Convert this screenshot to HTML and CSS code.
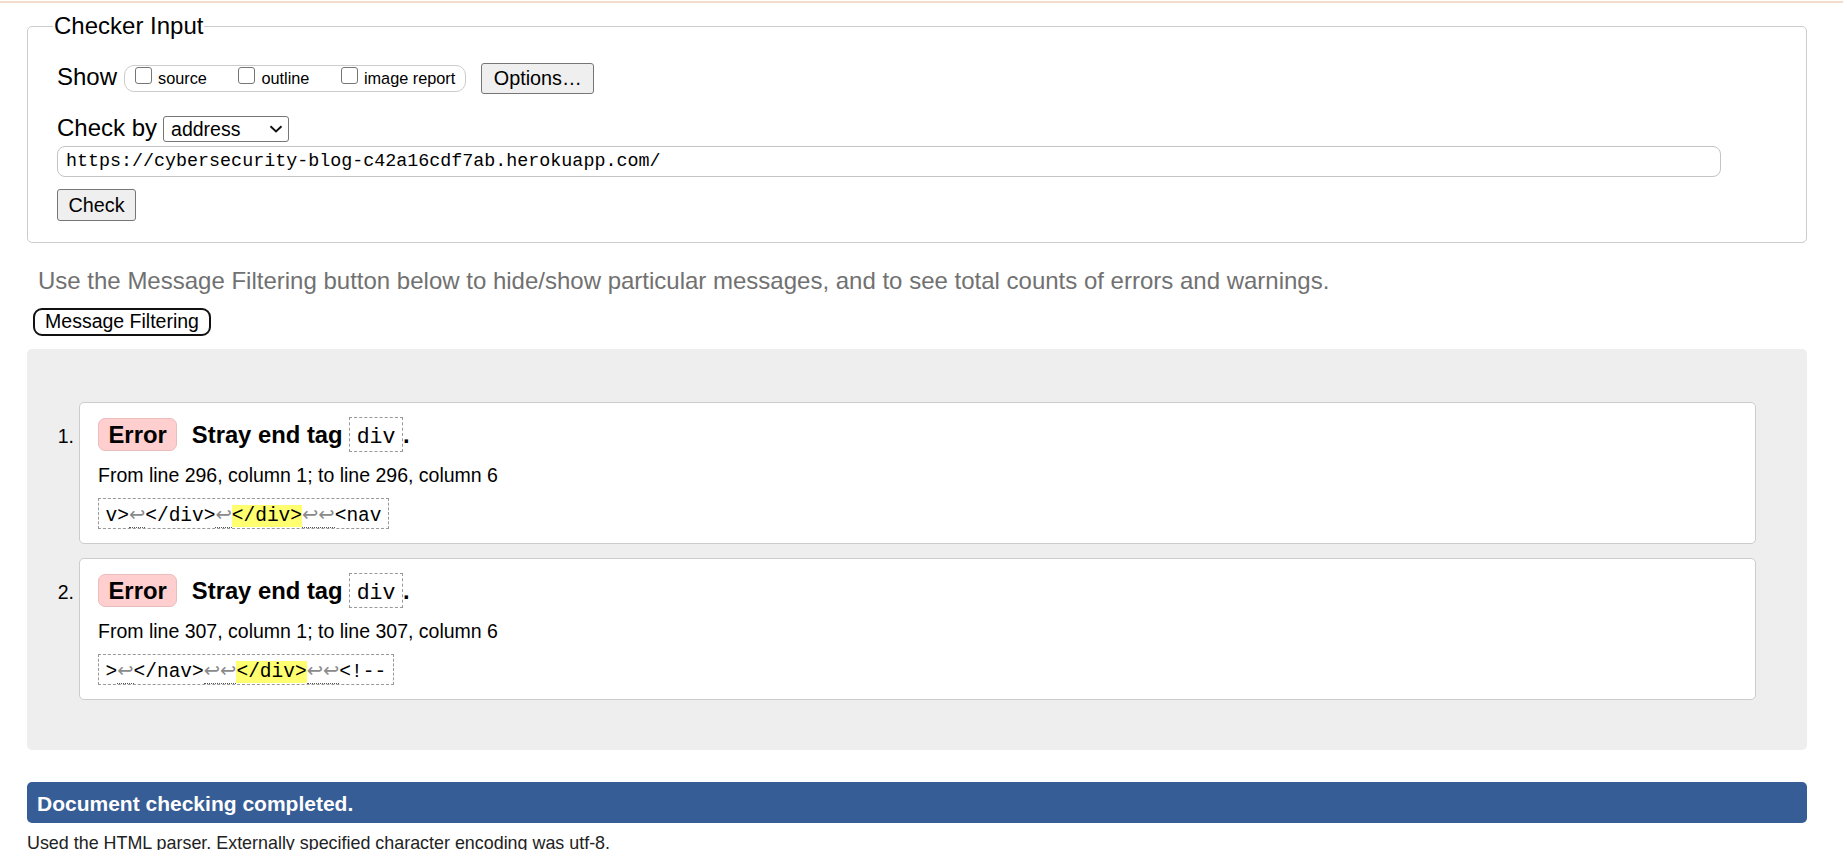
FILE: index.html
```html
<!DOCTYPE html>
<html lang="en">
<head>
<meta charset="utf-8">
<title>Nu Html Checker</title>
<link rel="stylesheet" href="styles.css">
</head>
<body>
<div class="topline"></div>
<main class="page">
  <form class="checker">
    <fieldset class="input-set">
      <legend>Checker Input</legend>
      <div class="row show-row">
        <span class="lbl">Show</span>
        <span class="opts">
          <label class="opt"><input type="checkbox"><span>source</span></label>
          <label class="opt"><input type="checkbox"><span>outline</span></label>
          <label class="opt"><input type="checkbox"><span>image report</span></label>
        </span>
        <button type="button" class="btn btn-options">Options…</button>
      </div>
      <div class="row by-row">
        <span class="lbl">Check by</span>
        <span class="select" role="listbox"><span>address</span><svg class="chev" width="14" height="8" viewBox="0 0 14 8"><path d="M1.5 1.2 L7 6.5 L12.5 1.2" fill="none" stroke="#111" stroke-width="1.9"/></svg></span>
      </div>
      <input class="url" type="text" value="https://cybersecurity-blog-c42a16cdf7ab.herokuapp.com/">
      <button type="button" class="btn btn-check">Check</button>
    </fieldset>
  </form>
  <p class="hint">Use the Message Filtering button below to hide/show particular messages, and to see total counts of errors and warnings.</p>
  <button type="button" class="filter">Message Filtering</button>
  <div class="results">
    <ol class="messages">
      <li class="item">
        <span class="num">1.</span>
        <div class="msg">
          <p class="head"><strong class="badge">Error</strong> <span>Stray end tag <code>div</code>.</span></p>
          <p class="loc">From line 296, column 1; to line 296, column 6</p>
          <p class="extract">v&gt;<span class="lf">↩</span>&lt;/div&gt;<span class="lf">↩</span><b>&lt;/div&gt;</b><span class="lf">↩↩</span>&lt;nav</p>
        </div>
      </li>
      <li class="item">
        <span class="num">2.</span>
        <div class="msg">
          <p class="head"><strong class="badge">Error</strong> <span>Stray end tag <code>div</code>.</span></p>
          <p class="loc">From line 307, column 1; to line 307, column 6</p>
          <p class="extract">&gt;<span class="lf">↩</span>&lt;/nav&gt;<span class="lf">↩↩</span><b>&lt;/div&gt;</b><span class="lf">↩↩</span>&lt;!--</p>
        </div>
      </li>
    </ol>
  </div>
  <p class="end">Document checking completed.</p>
  <p class="details">Used the HTML parser. Externally specified character encoding was utf-8.</p>
</main>
</body>
</html>
```

FILE: styles.css
```css
* { box-sizing: border-box; }
html, body { margin: 0; padding: 0; background: #fff; }
body {
  font-family: "Liberation Sans", Arial, Helvetica, sans-serif;
  font-size: 19.5px;
  color: #000;
}
.topline { height: 2px; margin-top: 1px; background: #f3dccb; }
.page { margin: 0 36px 0 27px; }

.checker { margin: 9px 0 0; }
.input-set {
  margin: 0;
  min-width: 0;
  padding: 23px 29px 21px 29px;
  border: 1px solid #ccc;
  border-radius: 5px;
}
.input-set legend {
  font-size: 24px;
  line-height: 28px;
  padding: 0 1px;
  margin-left: -4px;
}

.row { display: flex; align-items: center; }
.show-row { height: 31px; }
.lbl { font-size: 24px; margin-bottom: 2.6px; }

.opts {
  display: inline-flex;
  align-items: center;
  height: 27px;
  margin-left: 7px;
  padding: 0 10px;
  gap: 31.5px;
  border: 1px solid #ccc;
  border-radius: 10px;
}
.opt { display: flex; align-items: center; gap: 6px; font-size: 16.3px; }
.opt input {
  appearance: none;
  -webkit-appearance: none;
  align-self: flex-start;
  width: 17px;
  height: 17px;
  margin: -2.5px 0 0;
  border: 1px solid #767676;
  border-radius: 3px;
  background: #fff;
}

.btn {
  font-family: inherit;
  font-size: 19.8px;
  color: #000;
  background: #efefef;
  border: 1px solid #767676;
  border-radius: 3px;
  padding: 0;
}
.btn-options { width: 113px; height: 31px; margin-left: 15px; }

.by-row { height: 26px; margin-top: 22px; }
.select {
  display: flex;
  align-items: center;
  justify-content: space-between;
  width: 126px;
  height: 26px;
  margin-left: 6px;
  padding: 0 5px 0 7px;
  border: 1px solid #767676;
  border-radius: 3px;
  background: #fff;
  font-size: 19.5px;
}
.chev { display: block; }

.url {
  display: block;
  width: calc(100% - 56px);
  height: 31px;
  margin: 4px 0 0;
  padding: 0 8px;
  border: 1px solid #c4c4c4;
  border-radius: 8px;
  font-family: "Liberation Mono", "DejaVu Sans Mono", monospace;
  font-size: 18.35px;
  color: #000;
  background: #fff;
}
.btn-check { display: block; width: 79px; height: 32px; margin-top: 12px; }

.hint {
  margin: 23.5px 0 0 11px;
  font-size: 24px;
  color: #717171;
}
.filter {
  display: block;
  width: 178px;
  height: 28px;
  margin: 13px 0 0 6px;
  padding: 0;
  font-family: inherit;
  font-size: 19.5px;
  color: #000;
  background: #fff;
  border: 2px solid #111;
  border-radius: 9px;
}

.results {
  margin-top: 13px;
  padding: 53px 51px 50px 0;
  background: #eee;
  border-radius: 5px;
}
.messages {
  list-style: none;
  margin: 0;
  padding: 0;
  display: flex;
  flex-direction: column;
  gap: 14px;
}
.item { display: flex; align-items: baseline; }
.num { flex: none; width: 47px; margin-right: 5px; text-align: right; }
.msg {
  flex: 1;
  min-width: 0;
  background: #fff;
  border: 1px solid #ccc;
  border-radius: 5px;
  padding: 14px 18px;
}
.head { margin: 0; font-size: 23.8px; font-weight: bold; }
.badge {
  display: inline-block;
  padding: 2px 9.5px;
  margin-right: 8px;
  line-height: 27px;
  background: #ffcfcf;
  border: 1px solid #ebbcbc;
  border-radius: 7px;
}
.head code {
  display: inline-block;
  font-family: "Liberation Mono", "DejaVu Sans Mono", monospace;
  font-size: 21.5px;
  font-weight: normal;
  line-height: normal;
  padding: 7px 6.5px 2.5px;
  border: 1px dashed #999;
}
.loc { margin: 12px 0 0; }
.extract {
  width: fit-content;
  margin: 10.5px 0 0;
  padding: 5px 6.5px 0;
  border: 1px dashed #999;
  font-family: "Liberation Mono", "DejaVu Sans", monospace;
  font-size: 19.5px;
  line-height: 24px;
  white-space: pre;
}
.extract b { font-weight: normal; background: #ffff70; }
.lf { color: #8a8a8a; border-bottom: 1px dotted #555; }

.end {
  margin: 32px 0 0;
  padding: 10px 10px 7px;
  background: #365d95;
  color: #fff;
  font-weight: bold;
  font-size: 21px;
  border-radius: 5px;
}
.details { margin: 10px 0 0; font-size: 17.9px; color: #222; }
```
